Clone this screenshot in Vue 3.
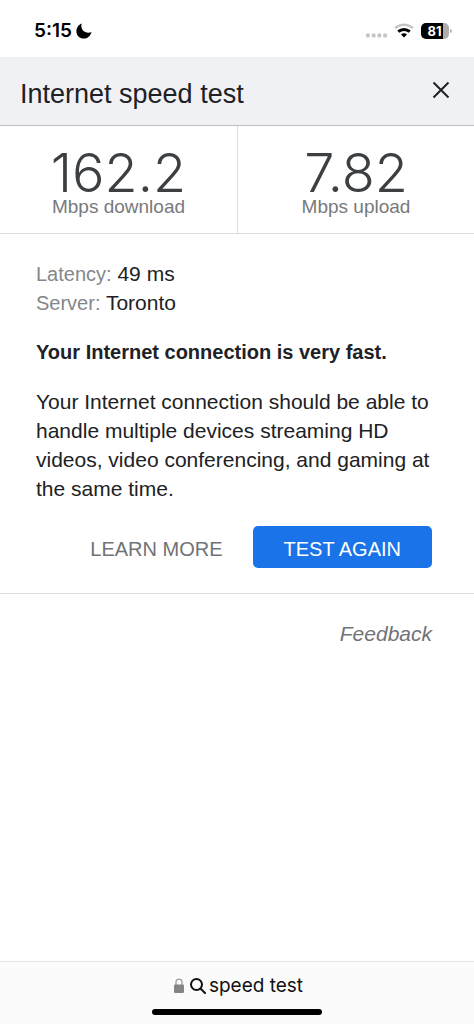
<script setup>
const results = [
  { value: '162.2', label: 'Mbps download' },
  { value: '7.82', label: 'Mbps upload' },
]
const details = [
  { name: 'Latency:', value: '49 ms' },
  { name: 'Server:', value: 'Toronto' },
]
</script>

<template>
  <div class="screen">
    <div class="status">
      <div class="clock">
        <span>5:15</span>
        <svg class="moon" viewBox="0 0 16 16" aria-hidden="true">
          <path d="M5.800 0.500C3.800 5.600 8.200 11.400 15.600 9.200C14.300 13 11.400 15.600 7.800 15.600C3.600 15.600 0.400 12.400 0.400 8.200C0.400 4.600 2.600 1.600 5.800 0.500Z" />
        </svg>
      </div>
      <div class="indicators">
        <svg class="signal" viewBox="0 0 22 5" aria-hidden="true">
          <rect x="0" y="0.500" width="4" height="4" rx="1.200" />
          <rect x="6" y="0.500" width="4" height="4" rx="1.200" />
          <rect x="12" y="0.500" width="4" height="4" rx="1.200" />
          <rect x="18" y="0.500" width="4" height="4" rx="1.200" />
        </svg>
        <svg class="wifi" viewBox="0 0 20 15" aria-hidden="true">
          <path d="M1.200 5.200C6.200 0.500 13.800 0.500 18.800 5.200" fill="none" stroke="#c4c4c6" stroke-width="2.500" />
          <path d="M4.300 8.700C7.500 5.600 12.500 5.600 15.700 8.700" fill="none" stroke="#000" stroke-width="3" />
          <path d="M7 11.500C8.700 9.800 11.300 9.800 13 11.500L10 14.600Z" />
        </svg>
        <div class="battery"><span class="level">81</span></div>
      </div>
    </div>

    <header class="header">
      <h1>Internet speed test</h1>
      <button class="close" type="button" aria-label="Close">
        <svg viewBox="0 0 18 18" aria-hidden="true">
          <path d="M1.500 1.500L16.500 16.500M16.500 1.500L1.500 16.500" />
        </svg>
      </button>
    </header>

    <main>
      <section class="results">
        <div v-for="r in results" :key="r.label" class="result">
          <div class="number">{{ r.value }}</div>
          <div class="unit">{{ r.label }}</div>
        </div>
      </section>

      <section class="summary">
        <p v-for="d in details" :key="d.name"><span class="name">{{ d.name }}</span> {{ d.value }}</p>
        <h2>Your Internet connection is very fast.</h2>
        <p>
          Your Internet connection should be able to handle multiple devices
          streaming HD videos, video conferencing, and gaming at the same time.
        </p>
        <div class="actions">
          <button class="learn" type="button">LEARN MORE</button>
          <button class="again" type="button">TEST AGAIN</button>
        </div>
      </section>

      <div class="feedback"><a href="#feedback">Feedback</a></div>
    </main>

    <footer class="browser-bar">
      <button class="address" type="button">
        <svg class="lock" viewBox="0 0 10 15" aria-hidden="true">
          <path d="M2 7V4.200C2 0 8 0 8 4.200V7" fill="none" stroke="#99999b" stroke-width="1.300" />
          <rect x="0" y="6.500" width="10" height="8.500" rx="1.300" fill="#858587" />
        </svg>
        <svg class="search" viewBox="0 0 16 16" aria-hidden="true">
          <circle cx="6.500" cy="6.500" r="5.500" />
          <path d="M10.500 10.500L15 15" />
        </svg>
        <span>speed test</span>
      </button>
      <div class="home"></div>
    </footer>
  </div>
</template>

<style>
body {
  margin: 0;
  background: #fff;
}
</style>

<style scoped>
.screen {
  display: flex;
  flex-direction: column;
  min-height: 100vh;
  background: #fff;
  color: #202124;
  font-family: "Liberation Sans", Arial, sans-serif;
  font-size: 21px;
  line-height: 29px;
}

h1,
h2,
p {
  margin: 0;
}

button {
  margin: 0;
  padding: 0;
  border: 0;
  background: none;
  color: inherit;
  font: inherit;
  cursor: pointer;
}

svg {
  display: block;
}

.status {
  display: flex;
  justify-content: space-between;
  align-items: center;
  height: 57px;
  padding: 4px 22px 0 34px;
  box-sizing: border-box;
  color: #000;
}

.clock {
  display: flex;
  align-items: center;
  gap: 4px;
  font-family: Inter, sans-serif;
  font-size: 19px;
  font-weight: 600;
}

.moon {
  width: 16px;
  height: 16px;
}

.indicators {
  display: flex;
  align-items: center;
  gap: 7px;
}

.signal {
  width: 21px;
  height: 5px;
  margin-top: 9px;
  fill: #c4c4c6;
}

.wifi {
  width: 20px;
  height: 15px;
}

.battery {
  position: relative;
  width: 28px;
  height: 16px;
  margin-right: 3px;
  border-radius: 5px;
  background: linear-gradient(to right, #000 80%, #aeaeb0 80%);
}

.battery::after {
  content: "";
  position: absolute;
  top: 6px;
  right: -3px;
  width: 2px;
  height: 4px;
  border-radius: 0 2px 2px 0;
  background: #b4b4b6;
}

.level {
  display: block;
  padding-right: 1px;
  color: #fff;
  font-family: Inter, sans-serif;
  font-size: 13px;
  font-weight: 700;
  line-height: 16px;
  text-align: center;
}

.header {
  display: flex;
  justify-content: space-between;
  align-items: flex-start;
  padding: 20px 20px 14px;
  border-bottom: 1px solid #bdbcc4;
  background: #f0f1f5;
}

h1 {
  font-size: 27px;
  font-weight: 400;
  line-height: 34px;
}

.close {
  padding: 4px;
}

.close svg {
  width: 18px;
  height: 18px;
  fill: none;
  stroke: #202124;
  stroke-width: 2;
}

.results {
  display: grid;
  grid-template-columns: 1fr 1fr;
  border-bottom: 1px solid #dadce0;
}

.result {
  padding: 23px 0 15px;
  text-align: center;
}

.result + .result {
  border-left: 1px solid #dadce0;
}

.number {
  color: #3c4043;
  font-family: Inter, sans-serif;
  font-size: 54px;
  font-weight: 300;
  line-height: 47px;
}

.unit {
  color: #77797c;
  font-size: 19px;
  line-height: 22px;
}

.summary {
  padding: 25px 42px 25px 36px;
  border-bottom: 1px solid #dadce0;
}

.name {
  color: #85878a;
  font-size: 20px;
  line-height: 20px;
}

h2 {
  margin: 21px 0 20px;
  font-size: 20px;
  font-weight: 700;
  line-height: 29px;
}

.actions {
  display: flex;
  justify-content: flex-end;
  gap: 30px;
  margin-top: 23px;
  font-size: 20px;
}

.learn {
  padding: 9px 0 4px;
  color: #707377;
}

.again {
  padding: 9px 31px 4px;
  border-radius: 5px;
  background: #1a73e8;
  color: #fff;
}

.feedback {
  padding: 25px 42px;
  text-align: right;
}

.feedback a {
  color: #707377;
  font-style: italic;
  text-decoration: none;
}

.browser-bar {
  display: flex;
  flex-direction: column;
  align-items: center;
  gap: 9px;
  margin-top: auto;
  padding: 9px 0;
  border-top: 1px solid #e4e5e6;
  background: #fbfbfb;
}

.address {
  display: flex;
  align-items: center;
  padding-left: 3px;
  color: #111;
  font-family: Inter, sans-serif;
  font-size: 19px;
}

.lock {
  width: 10px;
  height: 15px;
  margin-right: 6px;
}

.search {
  width: 16px;
  height: 16px;
  margin-right: 3px;
  fill: none;
  stroke: #111;
  stroke-width: 2;
  stroke-linecap: round;
}

.home {
  width: 36%;
  height: 6px;
  border-radius: 3px;
  background: #000;
}
</style>
